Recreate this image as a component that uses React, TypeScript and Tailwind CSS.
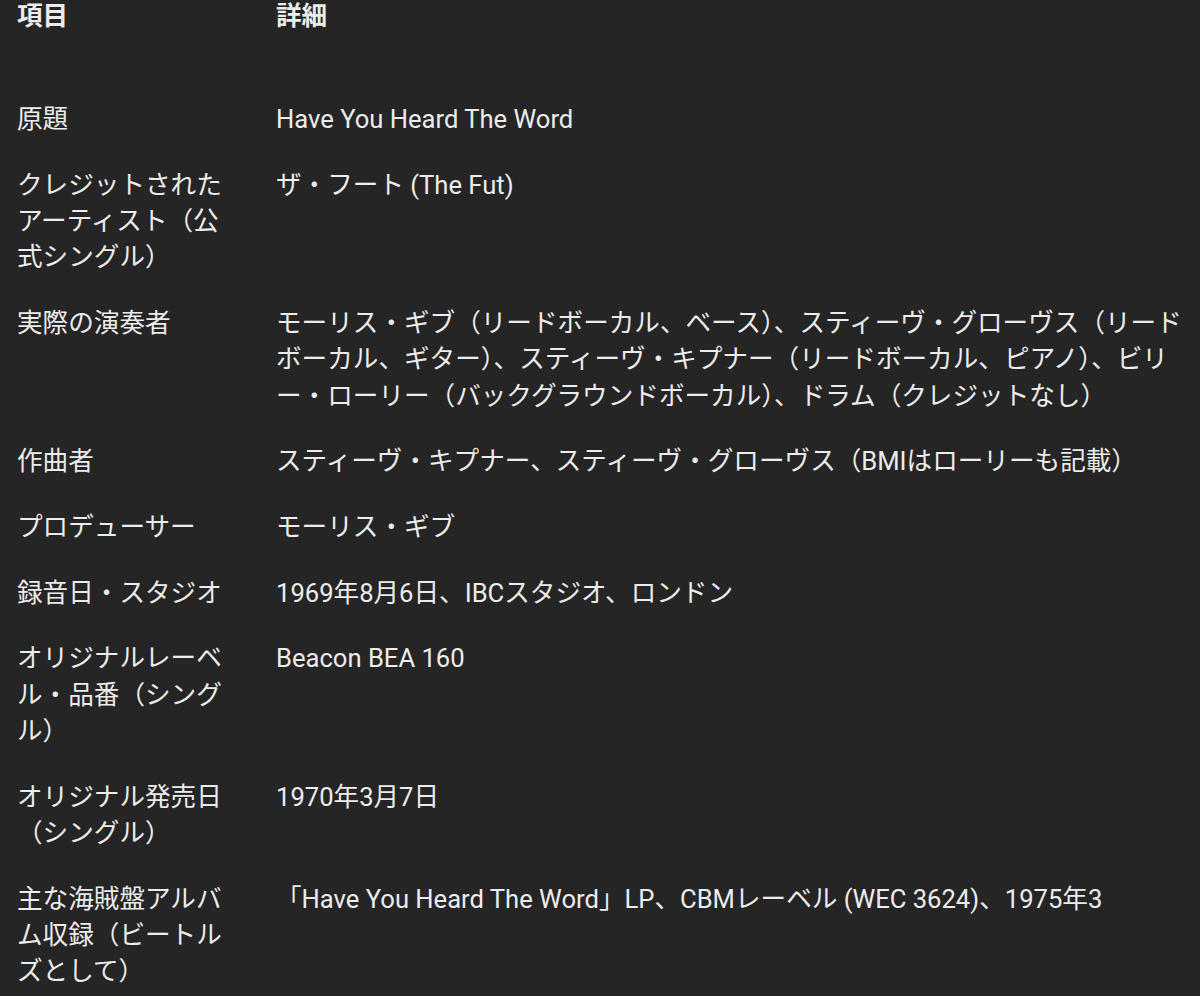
const rows: { label: string; detail: string }[] = [
  { label: "原題", detail: "Have You Heard The Word" },
  { label: "クレジットされたアーティスト（公式シングル）", detail: "ザ・フート (The Fut)" },
  {
    label: "実際の演奏者",
    detail:
      "モーリス・ギブ（リードボーカル、ベース）、スティーヴ・グローヴス（リードボーカル、ギター）、スティーヴ・キプナー（リードボーカル、ピアノ）、ビリー・ローリー（バックグラウンドボーカル）、ドラム（クレジットなし）",
  },
  { label: "作曲者", detail: "スティーヴ・キプナー、スティーヴ・グローヴス（BMIはローリーも記載）" },
  { label: "プロデューサー", detail: "モーリス・ギブ" },
  { label: "録音日・スタジオ", detail: "1969年8月6日、IBCスタジオ、ロンドン" },
  { label: "オリジナルレーベル・品番（シングル）", detail: "Beacon BEA 160" },
  { label: "オリジナル発売日（シングル）", detail: "1970年3月7日" },
  {
    label: "主な海賊盤アルバム収録（ビートルズとして）",
    detail: "「Have You Heard The Word」LP、CBMレーベル (WEC 3624)、1975年3",
  },
]

export default function App() {
  return (
    <div
      className="min-h-[996px] w-full overflow-hidden bg-[#252525] text-[#ececec] text-[25.6px] leading-[36.4px]"
      style={{ fontFamily: 'Roboto, "Noto Sans CJK JP", sans-serif' }}
    >
      {/* header */}
      <div className="grid grid-cols-[259px_1fr] -mt-[2px] pb-[52px] font-bold">
        <div className="pl-[17px] pr-[34px]">項目</div>
        <div className="pl-[17px] pr-[8px]">詳細</div>
      </div>
      {rows.map((row) => (
        <div key={row.label} className="grid grid-cols-[259px_1fr] py-[14.6px]">
          <div className="pl-[17px] pr-[34px]">{row.label}</div>
          <div className="pl-[17px] pr-[8px]">{row.detail}</div>
        </div>
      ))}
    </div>
  )
}
